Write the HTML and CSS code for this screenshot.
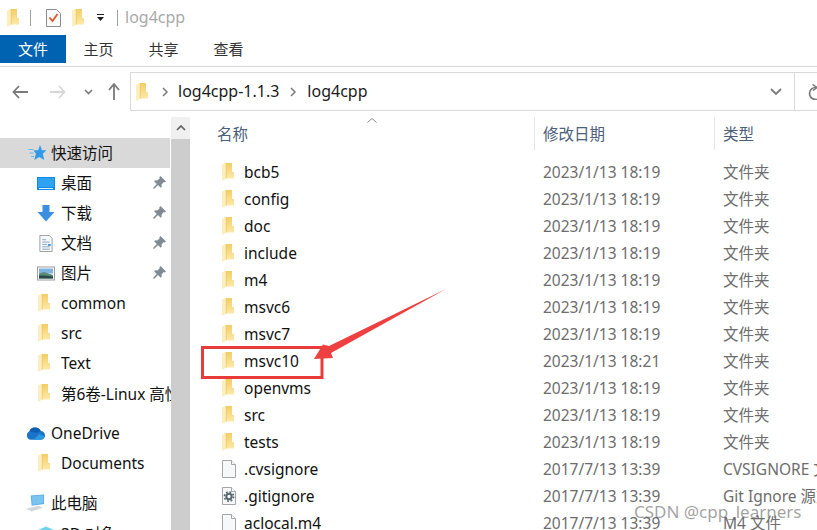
FILE: index.html
```html
<!DOCTYPE html>
<html lang="zh">
<head>
<meta charset="utf-8">
<title>log4cpp</title>
<link rel="stylesheet" href="styles.css">
</head>
<body>
<svg class="defs" width="0" height="0" aria-hidden="true">
  <defs>
    <linearGradient id="fg2" x1="0" y1="0" x2="0" y2="1">
      <stop offset="0" stop-color="#f3cd66"/>
      <stop offset="1" stop-color="#fde9a9"/>
    </linearGradient>
    <symbol id="folder" viewBox="0 0 12 18">
      <path d="M3 0h7v9h2v6.500H3z" fill="url(#fg2)"/>
      <path d="M0 1.500L4 0v15.500L1 17.800 0 17z" fill="#fdeebf"/>
      <path d="M4.300 0v15.500" stroke="#eec95f" stroke-width=".8" fill="none"/>
    </symbol>
    <symbol id="file" viewBox="0 0 14 18">
      <path d="M.5.500h9l4 4v13H.5z" fill="#f6f8fa" stroke="#a2a6aa"/>
      <path d="M9.500.500v4h4" fill="#fff" stroke="#a2a6aa"/>
    </symbol>
    <symbol id="pin" viewBox="0 0 13 13">
      <path d="M7.500 0L13 5.500l-1.200 1-1-.4-2.300 2.300.2 2.300-1 1-2.700-2.700L1 13 0 12l3.800-4-2.700-2.700 1-1 2.300.2 2.300-2.300-.4-1z" fill="#7f8a95"/>
    </symbol>
  </defs>
</svg>

<header class="titlebar">
  <svg class="ic-folder"><use href="#folder"/></svg>
  <span class="sep sep-a"></span>
  <svg class="ic-check" viewBox="0 0 15 18">
    <path d="M.5.500h10l4 4v13H.5z" fill="#fafafa" stroke="#8e8e8e"/>
    <path d="M3.500 8.500l3 3.500 5-7" fill="none" stroke="#e0562a" stroke-width="1.800"/>
  </svg>
  <svg class="ic-folder ic-folder-b"><use href="#folder"/></svg>
  <svg class="ic-drop" viewBox="0 0 7 7">
    <path d="M0 0h7v1H0zM0 3h7L3.500 7z" fill="#222"/>
  </svg>
  <span class="sep sep-b"></span>
  <span class="wintitle">log4cpp</span>
</header>

<nav class="ribbon">
  <span class="tab tab-active">文件</span>
  <span class="tab">主页</span>
  <span class="tab">共享</span>
  <span class="tab">查看</span>
</nav>

<div class="addressrow">
  <div class="navbtns">
    <svg class="nav-back" viewBox="0 0 16 14"><path d="M7 1L1.500 7 7 13M1.500 7H16" fill="none" stroke="#7a7a7a" stroke-width="1.800"/></svg>
    <svg class="nav-fwd" viewBox="0 0 16 14"><path d="M9 1l5.500 6L9 13M14.500 7H0" fill="none" stroke="#d6d6d6" stroke-width="1.800"/></svg>
    <svg class="nav-down" viewBox="0 0 9 6"><path d="M1 1l3.500 3.500L8 1" fill="none" stroke="#7a7a7a" stroke-width="1.600"/></svg>
    <svg class="nav-up" viewBox="0 0 12 17"><path d="M1 7l5-6 5 6M6 1v16" fill="none" stroke="#7a7a7a" stroke-width="1.800"/></svg>
  </div>
  <div class="addressbox">
    <svg class="ic-folder ic-folder-c"><use href="#folder"/></svg>
    <svg class="crumb-sep crumb-sep-a" viewBox="0 0 6 10"><path d="M1 1l4 4-4 4" fill="none" stroke="#7a7a7a" stroke-width="1.500"/></svg>
    <span class="crumb">log4cpp-1.1.3</span>
    <svg class="crumb-sep crumb-sep-b" viewBox="0 0 6 10"><path d="M1 1l4 4-4 4" fill="none" stroke="#7a7a7a" stroke-width="1.500"/></svg>
    <span class="crumb">log4cpp</span>
    <svg class="addr-down" viewBox="0 0 12 8"><path d="M1 1l5 5 5-5" fill="none" stroke="#7a7a7a" stroke-width="1.800"/></svg>
    <div class="refresh">
      <svg class="ic-refresh" viewBox="0 0 14 16"><path d="M8 3.500A6 6 0 1 0 13.500 10" fill="none" stroke="#7a7a7a" stroke-width="1.700"/><path d="M4.500 .5L9 3.500 5 6.500" fill="none" stroke="#7a7a7a" stroke-width="1.500"/></svg>
    </div>
  </div>
</div>

<main class="main">
  <aside class="sidebar">
    <ul class="tree">
      <li class="node node-top node-active">
        <svg class="ic-top ic-star" viewBox="0 0 18 16">
          <path d="M11.500 0l2 5.300H18l-3.700 3.400 1.500 6.300-5-3-5 3 1.600-6.300L5 5.300h4.700z" fill="#2f9be8"/>
          <path d="M0 4.500h5M1 8h4M2.500 11.500h3" stroke="#6ab8ee" stroke-width="1" fill="none"/>
        </svg>
        <span class="cjk">快速访问</span>
      </li>
      <li class="node">
        <svg class="ic-side" viewBox="0 0 18 13"><rect width="18" height="13" fill="#0f8ae6"/><path d="M1 1h16v9H1z" fill="#2ea3f2"/><path d="M2 11.500h14" stroke="#d8f0ff"/></svg>
        <span class="node-label cjk">桌面</span>
        <svg class="ic-pin"><use href="#pin"/></svg>
      </li>
      <li class="node">
        <svg class="ic-side" viewBox="0 0 18 17"><path d="M5.500 0h7v7H17.500L9 16.500.5 7h5z" fill="#3a8fe0"/></svg>
        <span class="node-label cjk">下载</span>
        <svg class="ic-pin"><use href="#pin"/></svg>
      </li>
      <li class="node">
        <svg class="ic-side" viewBox="0 0 18 18"><path d="M2.500.500h10l3 3v14h-13z" fill="#f7f8f9" stroke="#9a9da0"/><path d="M5 5h4M5 7.500h8M5 10h5M5 12.500h8M5 15h8" stroke="#7fa3c0"/><path d="M11 9.500h3v2h-3z" fill="#4b90c8"/></svg>
        <span class="node-label cjk">文档</span>
        <svg class="ic-pin"><use href="#pin"/></svg>
      </li>
      <li class="node">
        <svg class="ic-side" viewBox="0 0 18 14"><rect x=".5" y=".5" width="17" height="13" fill="#fff" stroke="#9a9da0"/><path d="M2 2h14v5H2z" fill="#7eb2e0"/><path d="M2 7l5-1.500 9 3V12H2z" fill="#5d8a78"/><path d="M2 9l6 0 8 1v2H2z" fill="#2a4a4a"/></svg>
        <span class="node-label cjk">图片</span>
        <svg class="ic-pin"><use href="#pin"/></svg>
      </li>
      <li class="node"><svg class="ic-folder ic-tree"><use href="#folder"/></svg><span class="node-label">common</span></li>
      <li class="node"><svg class="ic-folder ic-tree"><use href="#folder"/></svg><span class="node-label">src</span></li>
      <li class="node"><svg class="ic-folder ic-tree"><use href="#folder"/></svg><span class="node-label">Text</span></li>
      <li class="node"><svg class="ic-folder ic-tree"><use href="#folder"/></svg><span class="node-label">第6卷-Linux 高性能服务器</span></li>
      <li class="node node-top node-group">
        <svg class="ic-top" viewBox="0 0 20 14"><path d="M5 14A4.500 4.500 0 0 1 3.500 5.500 6.500 6.500 0 0 1 15.500 5 4.500 4.500 0 0 1 15.500 14z" fill="#1c74c8"/><path d="M8 14l6-6 5 2.500A3.500 3.500 0 0 1 15.500 14z" fill="#2b9ae0"/><path d="M3.500 5.500A6.500 6.500 0 0 1 15.500 5L11 7z" fill="#0f5fb0"/></svg>
        <span>OneDrive</span>
      </li>
      <li class="node"><svg class="ic-folder ic-tree"><use href="#folder"/></svg><span class="node-label">Documents</span></li>
      <li class="node node-top node-group">
        <svg class="ic-top ic-pc" viewBox="0 0 20 18"><path d="M5 1l14-1v10L6 12z" fill="#5aaee6"/><path d="M6 2l12-1v8L7 11z" fill="#7cc4f0"/><path d="M0 15l13-3 5 2-12 4z" fill="#d5d8da"/></svg>
        <span class="cjk">此电脑</span>
      </li>
      <li class="node">
        <svg class="ic-side" viewBox="0 0 18 14"><path d="M9 0l9 4-9 4-9-4z" fill="#6ed3e8"/><path d="M0 4l9 4v6L0 10z" fill="#38a9cf"/><path d="M18 4L9 8v6l9-4z" fill="#1f8fb8"/></svg>
        <span class="node-label">3D 对象</span>
      </li>
    </ul>
  </aside>
  <div class="scrollbar">
    <div class="scroll-btn"><svg class="ic-scroll" viewBox="0 0 10 6"><path d="M1 5l4-4 4 4" fill="none" stroke="#606060" stroke-width="1.700"/></svg></div>
    <div class="scroll-thumb"></div>
  </div>
  <section class="files">
    <div class="colhead">
      <span class="col-name">名称</span>
      <span class="col-date">修改日期</span>
      <span class="col-type">类型</span>
      <svg class="sort-arrow" viewBox="0 0 10 5"><path d="M.5 4.500L5 .5l4.500 4" fill="none" stroke="#8a8a8a"/></svg>
    </div>
    <ul class="rows">
      <li class="row"><svg class="ic-row"><use href="#folder"/></svg><span class="name">bcb5</span><span class="meta">2023/1/13 18:19</span><span class="meta">文件夹</span></li>
      <li class="row"><svg class="ic-row"><use href="#folder"/></svg><span class="name">config</span><span class="meta">2023/1/13 18:19</span><span class="meta">文件夹</span></li>
      <li class="row"><svg class="ic-row"><use href="#folder"/></svg><span class="name">doc</span><span class="meta">2023/1/13 18:19</span><span class="meta">文件夹</span></li>
      <li class="row"><svg class="ic-row"><use href="#folder"/></svg><span class="name">include</span><span class="meta">2023/1/13 18:19</span><span class="meta">文件夹</span></li>
      <li class="row"><svg class="ic-row"><use href="#folder"/></svg><span class="name">m4</span><span class="meta">2023/1/13 18:19</span><span class="meta">文件夹</span></li>
      <li class="row"><svg class="ic-row"><use href="#folder"/></svg><span class="name">msvc6</span><span class="meta">2023/1/13 18:19</span><span class="meta">文件夹</span></li>
      <li class="row"><svg class="ic-row"><use href="#folder"/></svg><span class="name">msvc7</span><span class="meta">2023/1/13 18:19</span><span class="meta">文件夹</span></li>
      <li class="row"><svg class="ic-row"><use href="#folder"/></svg><span class="name">msvc10</span><span class="meta">2023/1/13 18:21</span><span class="meta">文件夹</span></li>
      <li class="row"><svg class="ic-row"><use href="#folder"/></svg><span class="name">openvms</span><span class="meta">2023/1/13 18:19</span><span class="meta">文件夹</span></li>
      <li class="row"><svg class="ic-row"><use href="#folder"/></svg><span class="name">src</span><span class="meta">2023/1/13 18:19</span><span class="meta">文件夹</span></li>
      <li class="row"><svg class="ic-row"><use href="#folder"/></svg><span class="name">tests</span><span class="meta">2023/1/13 18:19</span><span class="meta">文件夹</span></li>
      <li class="row"><svg class="ic-row ic-file"><use href="#file"/></svg><span class="name">.cvsignore</span><span class="meta">2017/7/13 13:39</span><span class="meta">CVSIGNORE 文件</span></li>
      <li class="row"><svg class="ic-row ic-file" viewBox="0 0 14 18"><use href="#file"/><circle cx="7" cy="9.500" r="4.600" fill="none" stroke="#55666f" stroke-width="1.600" stroke-dasharray="1.800 1.800"/><circle cx="7" cy="9.500" r="2.700" fill="none" stroke="#55666f" stroke-width="2"/></svg><span class="name">.gitignore</span><span class="meta">2017/7/13 13:39</span><span class="meta">Git Ignore 源文件</span></li>
      <li class="row"><svg class="ic-row ic-file"><use href="#file"/></svg><span class="name">aclocal.m4</span><span class="meta">2017/7/13 13:39</span><span class="meta">M4 文件</span></li>
    </ul>
  </section>
</main>

<svg class="annotation" viewBox="0 0 817 530" aria-hidden="true">
  <rect x="202.500" y="347.500" width="119.500" height="30" fill="none" stroke="#ea3b3b" stroke-width="3"/>
  <path d="M446 289L329 346 323 344.500 314 359 333 358 331 353z" fill="#ee4040"/>
</svg>
<span class="watermark">CSDN @cpp_learners</span>
</body>
</html>
```
FILE: styles.css
```css
* { box-sizing: border-box; }
html, body {
  margin: 0;
  padding: 0;
  width: 817px;
  height: 530px;
  overflow: hidden;
  background: #fff;
}
body {
  position: relative;
  font-family: "Noto Sans", "Noto Sans CJK SC", sans-serif;
  font-size: 15.500px;
  color: #111;
}
ul { list-style: none; margin: 0; padding: 0; }
svg { display: block; flex: none; }
.defs { position: absolute; }

/* title bar */
.titlebar {
  height: 35px;
  display: flex;
  align-items: center;
  padding-left: 7px;
}
.ic-folder { width: 12px; height: 18px; }
.sep { width: 1px; height: 16px; background: #a0a0a0; }
.sep-a { margin-left: 11px; }
.ic-check { width: 15px; height: 18px; margin-left: 15px; }
.ic-folder-b { margin-left: 11px; }
.ic-drop { width: 7px; height: 7px; margin-left: 13px; }
.sep-b { margin-left: 13px; }
.wintitle { margin-left: 7px; padding-bottom: 2px; font-size: 16px; color: #a9a9a9; }

/* ribbon */
.ribbon {
  height: 28px;
  display: flex;
  align-items: center;
}
.tab { width: 65px; height: 28px; padding-top: 1px; line-height: 27px; font-size: 15px; text-align: center; color: #333; }
.tab-active { width: 66px; background: #0063b1; color: #fff; }

/* address row */
.addressrow {
  margin-top: 3px;
  height: 51px;
  border-top: 1px solid #d9d9d9;
  padding-top: 5px;
  display: flex;
  align-items: flex-start;
}
.navbtns { width: 130px; height: 39px; display: flex; align-items: center; padding-left: 12px; }
.nav-back { width: 16px; height: 14px; }
.nav-fwd { width: 16px; height: 14px; margin-left: 22px; }
.nav-down { width: 9px; height: 6px; margin-left: 18px; }
.nav-up { width: 12px; height: 17px; margin-left: 15px; }
.addressbox {
  flex: 1;
  height: 39px;
  border: 1px solid #d9d9d9;
  border-right: 0;
  display: flex;
  align-items: center;
  padding-left: 5px;
  color: #1a1a1a;
}
.crumb { font-size: 16px; padding-bottom: 2px; }
.crumb-sep { width: 6px; height: 10px; }
.crumb-sep-a { margin: 0 10px 0 14px; }
.crumb-sep-b { margin: 0 11px 0 11px; }
.addr-down { width: 12px; height: 8px; margin-left: auto; }
.refresh {
  width: 23px;
  height: 37px;
  margin-left: 12px;
  border-left: 1px solid #d9d9d9;
  display: flex;
  align-items: center;
  padding-left: 13px;
  overflow: hidden;
}
.ic-refresh { width: 14px; height: 16px; }

/* main */
.main {
  height: 413px;
  display: flex;
  overflow: hidden;
}
.sidebar { width: 171px; padding-top: 21px; overflow: hidden; flex: none; }
.node {
  height: 30px;
  display: flex;
  align-items: center;
  padding-left: 37px;
  white-space: nowrap;
  overflow: hidden;
  position: relative;
}
.node-top { padding-left: 26px; }
.node-active { background: #d9d9d9; width: 170px; }
.node-group { margin-top: 10px; }
.ic-top { width: 19px; height: 16px; margin-right: 6px; }
.ic-pc { height: 18px; }
.ic-star { margin-left: 2px; margin-right: 4px; width: 19px; }
.ic-side { width: 18px; height: 17px; margin-right: 6px; }
.ic-tree { margin: 0 11px 0 1px; }
.node-label { flex: none; }
.cjk { padding-bottom: 2px; }
.ic-pin { width: 13px; height: 13px; position: absolute; left: 153px; top: 8px; }

.scrollbar { width: 19px; flex: none; display: flex; flex-direction: column; background: #cdcdcd; }
.scroll-btn { height: 22px; background: #f0f0f0; display: flex; align-items: center; justify-content: center; }
.ic-scroll { width: 10px; height: 6px; }
.scroll-thumb { flex: 1; }

/* files */
.files { flex: 1; min-width: 0; overflow: hidden; }
.colhead {
  position: relative;
  height: 33px;
  display: flex;
  align-items: flex-start;
  color: #4c607a;
}
.col-name { width: 345px; padding-left: 27px; height: 33px; line-height: 35px; border-right: 1px solid #e5e5e5; }
.col-date { width: 180px; padding-left: 8px; height: 33px; line-height: 35px; border-right: 1px solid #e5e5e5; }
.col-type { padding-left: 8px; height: 33px; line-height: 35px; }
.sort-arrow { position: absolute; left: 177px; top: 1px; width: 10px; height: 5px; }

.rows { padding-top: 8px; }
.row {
  height: 27px;
  display: grid;
  grid-template-columns: 22px 299px 180px 200px;
  align-items: center;
  padding-left: 32px;
  white-space: nowrap;
  width: 780px;
}
.row .name { color: #111; }
.row .meta { color: #6d6d6d; }
.ic-row { width: 12px; height: 18px; }
.ic-file { width: 14px; height: 18px; }

/* overlay annotation */
.annotation { position: absolute; left: 0; top: 0; width: 817px; height: 530px; pointer-events: none; }
.watermark {
  position: absolute;
  left: 634px;
  top: 500px;
  font-size: 17px;
  color: rgba(100, 100, 100, .6);
  white-space: nowrap;
}
```
